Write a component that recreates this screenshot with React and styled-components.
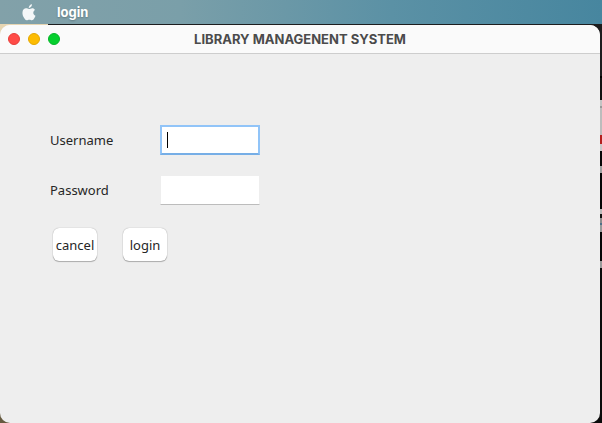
import React from "react";
import styled, { createGlobalStyle } from "styled-components";

const GlobalStyle = createGlobalStyle`
  *, *::before, *::after { box-sizing: border-box; }
  html, body { margin: 0; height: 100%; overflow: hidden; }
  #root { height: 100%; }
`;

const Desktop = styled.div`
  display: flex;
  flex-direction: column;
  height: 100vh;
  font-family: Inter, "Liberation Sans", sans-serif;
  background:
    linear-gradient(90deg, #e6d5b2 48px, transparent 48px) 0 24px / 100% 12px no-repeat,
    linear-gradient(#665a40, #665a40) 0 100% / 20px 30px no-repeat,
    linear-gradient(
      #1c1d1e 0 76px, #000 76px 78px, #111 78px 100px, #c4c4c4 100px 106px,
      #999 106px 108px, #bcbcbc 108px 135px, #b3201f 135px 144px, #c9c9c9 144px 151px,
      #070707 151px 166px, #a0a0a0 166px 173px, #050505 173px 209px, #b8b8b8 209px 214px,
      #111 214px 218px, #8c8c8c 218px 223px, #4f6f88 223px 225px, #999 225px 232px,
      #050505 232px 261px, #999 261px 268px, #0a0a0a 268px
    );
`;

const MenuBar = styled.header`
  display: flex;
  align-items: center;
  flex: none;
  gap: 20px;
  height: 24px;
  padding: 0 20px;
  background: linear-gradient(90deg, #82a1a9, #7a9fa9 30%, #5b91a5 65%, #47869f);
`;

const MenuButton = styled.button`
  display: flex;
  align-items: center;
  justify-content: center;
  min-width: ${(p) => (p.$icon ? "17px" : "0")};
  height: 24px;
  padding: 0;
  border: 0;
  background: none;
  color: #fff;
  font: 700 13px/24px Inter, "Liberation Sans", sans-serif;
  text-shadow: 0 1px 2px rgba(0, 0, 0, 0.25);
`;

const AppleIcon = styled.svg`
  width: 14px;
  height: 17px;
  fill: #f4f7f8;
`;

const Window = styled.main`
  display: flex;
  flex-direction: column;
  flex: 1;
  margin: 1px 2px 0 0;
  overflow: hidden;
  border-radius: 10px;
  background: #eee;
`;

const TitleBar = styled.div`
  display: grid;
  grid-template-columns: 1fr auto 1fr;
  align-items: center;
  flex: none;
  height: 29px;
  padding: 0 8px;
  border-bottom: 1px solid #cdcdcd;
  background: #fafafa;
`;

const WindowControls = styled.div`
  display: flex;
  gap: 8px;
`;

const ControlDot = styled.button`
  width: 12px;
  height: 12px;
  padding: 0;
  border: 1px solid ${(p) => p.$edge};
  border-radius: 50%;
  background: ${(p) => p.$fill};
`;

const Title = styled.h1`
  margin: 0;
  color: #4b4b4b;
  font-size: 13px;
  font-weight: 700;
  line-height: 16px;
  white-space: nowrap;
`;

const LoginForm = styled.form`
  display: flex;
  flex-direction: column;
  align-items: flex-start;
  gap: 20px;
  padding: 71px 50px 0;
  font-family: "Noto Sans", "Open Sans", sans-serif;
`;

const Field = styled.div`
  display: grid;
  grid-template-columns: 110px 100px;
  align-items: center;
`;

const Label = styled.label`
  color: #262626;
  font-size: 13px;
  line-height: 18px;
`;

const InputFrame = styled.div`
  display: flex;
  position: relative;
`;

const TextInput = styled.input`
  width: 100%;
  height: 30px;
  padding: 0 5px;
  border: ${(p) => (p.$active ? "2px solid #91c4f8" : "1px solid #eee")};
  border-bottom-color: ${(p) => (p.$active ? "#76aee6" : "#bcbcbc")};
  border-radius: 0;
  outline: none;
  background: #fff;
  caret-color: transparent;
  font: 13px/18px "Noto Sans", "Open Sans", sans-serif;
`;

const Caret = styled.span`
  position: absolute;
  top: 7px;
  left: 7px;
  width: 1px;
  height: 16px;
  background: #000;
`;

const Actions = styled.div`
  display: flex;
  gap: 26px;
  margin-top: 3px;
  padding-left: 3px;
`;

const PushButton = styled.button`
  display: flex;
  align-items: center;
  justify-content: center;
  width: 44px;
  height: 33px;
  padding: 0;
  border: 0;
  border-radius: 6px;
  background: #fff;
  box-shadow: 0 0 1px rgba(0, 0, 0, 0.4), 0 1px 1px rgba(0, 0, 0, 0.25);
  color: #262626;
  font: 13px/18px "Noto Sans", "Open Sans", sans-serif;
`;

export default function App() {
  return (
    <>
      <GlobalStyle />
      <Desktop>
        <MenuBar>
          <MenuButton type="button" $icon aria-label="Apple menu">
            <AppleIcon viewBox="0 0 14 17" aria-hidden="true">
              <path d="M9.9.2c.1 1-.3 1.9-.8 2.6-.6.7-1.4 1.2-2.3 1.1-.1-.9.3-1.9.9-2.5C8.300.7 9.200.200 9.900.2z" />
              <path d="M13 5.900c-1.100.7-1.700 1.600-1.700 2.800 0 1.400.8 2.500 2.200 3.100-.3.900-.7 1.700-1.200 2.500-.7 1-1.300 2-2.400 2-1 0-1.300-.6-2.600-.6-1.200 0-1.600.6-2.600.6S3 15.400 2.300 14.300C.900 12.300.200 9.900.500 7.900c.3-2.200 1.800-3.600 3.500-3.600 1.200 0 2.100.7 3 .7.8 0 1.900-.8 3.300-.8 1.100 0 2 .6 2.700 1.700z" />
            </AppleIcon>
          </MenuButton>
          <MenuButton type="button">login</MenuButton>
        </MenuBar>
        <Window>
          <TitleBar>
            <WindowControls>
              <ControlDot type="button" aria-label="Close" $fill="#ff4b47" $edge="#e63e3a" />
              <ControlDot type="button" aria-label="Minimize" $fill="#fdbc02" $edge="#e3a700" />
              <ControlDot type="button" aria-label="Zoom" $fill="#05cf2e" $edge="#06b42a" />
            </WindowControls>
            <Title>LIBRARY MANAGENENT SYSTEM</Title>
          </TitleBar>
          <LoginForm onSubmit={(e) => e.preventDefault()}>
            <Field>
              <Label htmlFor="username">Username</Label>
              <InputFrame>
                <TextInput id="username" type="text" $active />
                <Caret />
              </InputFrame>
            </Field>
            <Field>
              <Label htmlFor="password">Password</Label>
              <InputFrame>
                <TextInput id="password" type="password" />
              </InputFrame>
            </Field>
            <Actions>
              <PushButton type="button">cancel</PushButton>
              <PushButton type="submit">login</PushButton>
            </Actions>
          </LoginForm>
        </Window>
      </Desktop>
    </>
  );
}
